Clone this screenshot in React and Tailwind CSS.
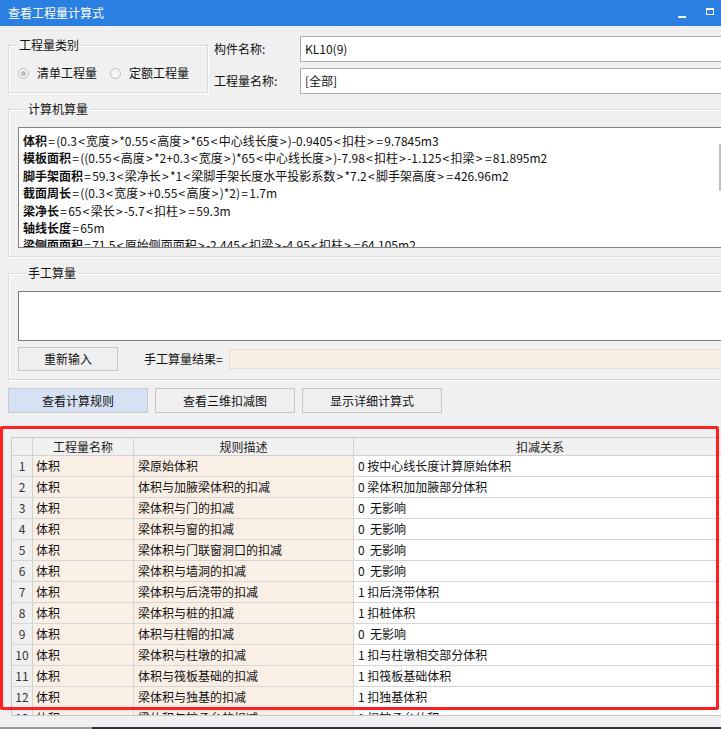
import React from "react";

const formulas = [
  ["体积", "=(0.3<宽度>*0.55<高度>*65<中心线长度>)-0.9405<扣柱>=9.7845m3"],
  ["模板面积", "=((0.55<高度>*2+0.3<宽度>)*65<中心线长度>)-7.98<扣柱>-1.125<扣梁>=81.895m2"],
  ["脚手架面积", "=59.3<梁净长>*1<梁脚手架长度水平投影系数>*7.2<脚手架高度>=426.96m2"],
  ["截面周长", "=((0.3<宽度>+0.55<高度>)*2)=1.7m"],
  ["梁净长", "=65<梁长>-5.7<扣柱>=59.3m"],
  ["轴线长度", "=65m"],
  ["梁侧面面积", "=71.5<原始侧面面积>-2.445<扣梁>-4.95<扣柱>=64.105m2"],
];

const rows = [
  ["体积", "梁原始体积", "0 按中心线长度计算原始体积"],
  ["体积", "体积与加腋梁体积的扣减", "0 梁体积加加腋部分体积"],
  ["体积", "梁体积与门的扣减", "0  无影响"],
  ["体积", "梁体积与窗的扣减", "0  无影响"],
  ["体积", "梁体积与门联窗洞口的扣减", "0  无影响"],
  ["体积", "梁体积与墙洞的扣减", "0  无影响"],
  ["体积", "梁体积与后浇带的扣减", "1 扣后浇带体积"],
  ["体积", "梁体积与桩的扣减", "1 扣桩体积"],
  ["体积", "体积与柱帽的扣减", "0  无影响"],
  ["体积", "梁体积与柱墩的扣减", "1 扣与柱墩相交部分体积"],
  ["体积", "体积与筏板基础的扣减", "1 扣筏板基础体积"],
  ["体积", "梁体积与独基的扣减", "1 扣独基体积"],
  ["体积", "梁体积与桩承台的扣减", "1 扣桩承台体积"],
];

function Formula({ text }) {
  const parts = text.split(/([<>=])/);
  return (
    <>
      {parts.map((p, i) =>
        p === "<" || p === ">" || p === "=" ? (
          <span key={i} className="mx-[1.25px]">
            {p}
          </span>
        ) : (
          <span key={i}>{p}</span>
        )
      )}
    </>
  );
}

function Radio({ checked, label }) {
  return (
    <div className="flex items-center">
      <span className="w-[11px] h-[11px] rounded-full border border-[#bcbcbc] bg-[#f4f4f4] flex items-center justify-center">
        {checked && <span className="w-[5px] h-[5px] rounded-full bg-[#bdbdbd]" />}
      </span>
      <span className="ml-[8px] text-[12px] leading-[16px] text-[#111]">{label}</span>
    </div>
  );
}

function Group({ title, className, children }) {
  return (
    <fieldset
      className={
        "border border-[#d9d9d9] shadow-[inset_1px_1px_0_#ffffff,1px_1px_0_#ffffff] " +
        (className || "")
      }
    >
      <legend className="ml-[8px] px-[2px] text-[12px] leading-[16px] text-[#111]">{title}</legend>
      {children}
    </fieldset>
  );
}

export default function App() {
  return (
    <div className="relative w-[721px] h-[729px] overflow-hidden bg-[#f0f0f0] flex flex-col font-['Noto_Sans_CJK_SC',sans-serif] text-[#111]">
      {/* Title bar */}
      <div className="h-[26px] shrink-0 bg-[#2b7fe0] flex items-center pl-[8px] text-white text-[12px]">
        <span className="flex-1">查看工程量计算式</span>
        <span className="w-[8px] h-[2px] bg-white mt-[7px] mr-[20px]" />
        <span className="w-[8px] h-[7px] border border-white border-t-2 mt-[-4px] mr-[7px]" />
      </div>

      {/* Row 1 */}
      <div className="flex pt-[10px] w-[760px]">
        <Group title="工程量类别" className="ml-[8px] w-[200px] h-[56px] mt-[1px]">
          <div className="flex items-center pl-[9px] pt-[12px] gap-[13px]">
            <Radio checked label="清单工程量" />
            <Radio label="定额工程量" />
          </div>
        </Group>
        <div className="ml-[6px] flex-1 flex flex-col gap-[6px]">
          <div className="flex items-center">
            <span className="w-[86px] text-[12px]">构件名称:</span>
            <div className="flex-1 h-[26px] bg-white border border-[#adadad] flex items-center pl-[4px] text-[12px]">
              KL10(9)
            </div>
          </div>
          <div className="flex items-center">
            <span className="w-[86px] text-[12px]">工程量名称:</span>
            <div className="flex-1 h-[26px] bg-white border border-[#adadad] flex items-center pl-[4px] text-[12px]">
              [全部]
            </div>
          </div>
        </div>
      </div>

      {/* 计算机算量 */}
      <Group title="计算机算量" className="ml-[8px] w-[760px] mt-[7px] pl-[9px] pt-[10px] pb-[8px] shrink-0">
        <div className="relative h-[121px] bg-white border border-[#828282] pl-[4px] pt-[4px] overflow-hidden">
          {formulas.map(([k, v], i) => (
            <div key={i} className="text-[12px] leading-[17.4px] whitespace-nowrap">
              <span className="font-bold">{k}</span>
              <Formula text={v} />
            </div>
          ))}
          <span className="absolute left-[700px] top-[16px] w-[2px] h-[47px] bg-[#c2c2c2]" />
        </div>
      </Group>

      {/* 手工算量 */}
      <Group title="手工算量" className="ml-[8px] w-[760px] mt-[8px] pl-[9px] pt-[10px] pb-[8px] shrink-0">
        <div className="h-[50px] bg-white border border-[#7a7a7a]" />
        <div className="flex items-center mt-[6px]">
          <button className="w-[100px] h-[24px] bg-[#efefef] border border-[#c6c6c6] text-[12px]">
            重新输入
          </button>
          <span className="ml-[26px] text-[12px]">手工算量结果=</span>
          <div className="ml-[6px] flex-1 h-[20px] bg-[#f8eee4] border border-[#e4dcd3]" />
        </div>
      </Group>

      {/* Buttons */}
      <div className="flex gap-[7px] ml-[8px] mt-[8px] shrink-0">
        <button className="w-[140px] h-[25px] bg-[#d6e2f3] border border-[#c2cad6] text-[12px]">
          查看计算规则
        </button>
        <button className="w-[140px] h-[25px] bg-[#efefef] border border-[#c6c6c6] text-[12px]">
          查看三维扣减图
        </button>
        <button className="w-[140px] h-[25px] bg-[#efefef] border border-[#c6c6c6] text-[12px]">
          显示详细计算式
        </button>
      </div>

      {/* Table */}
      <div className="ml-[11px] mt-[24px] w-[720px] h-[279px] shrink-0 overflow-hidden border-t border-l border-b border-[#c8c8c8] bg-white text-[12px]">
        <div className="grid grid-cols-[21px_101px_220px_372px] h-[18px] bg-[#f0f0f0] border-b border-[#d2d2d2] leading-[17px] text-[#222]">
          <div className="border-r border-[#d2d2d2]" />
          <div className="border-r border-[#d2d2d2] text-center">工程量名称</div>
          <div className="border-r border-[#d2d2d2] text-center">规则描述</div>
          <div className="text-center">扣减关系</div>
        </div>
        {rows.map(([a, b, c], i) => (
          <div
            key={i}
            className="grid grid-cols-[21px_101px_220px_372px] h-[21px] border-b border-[#d6d6d6] leading-[20px]"
          >
            <div className="bg-[#f0f0f0] border-r border-[#d2d2d2] text-center text-[#333]">{i + 1}</div>
            <div className="bg-[#faefe5] border-r border-[#d6d6d6] pl-[3px]">{a}</div>
            <div className="bg-[#faefe5] border-r border-[#d6d6d6] pl-[4px]">{b}</div>
            <div className="bg-white pl-[4px] whitespace-pre">{c}</div>
          </div>
        ))}
      </div>

      <div className="flex-1" />
      <div className="h-[2px] flex shrink-0">
        <div className="w-[92px] bg-[#9a9a9a]" />
        <div className="flex-1 bg-[#2e3338]" />
      </div>

      {/* Red annotation frame */}
      <div className="absolute left-0 top-[426px] w-[719px] h-[284px] border-[3px] border-[#ff1f1f] rounded-[2px] pointer-events-none" />
    </div>
  );
}
